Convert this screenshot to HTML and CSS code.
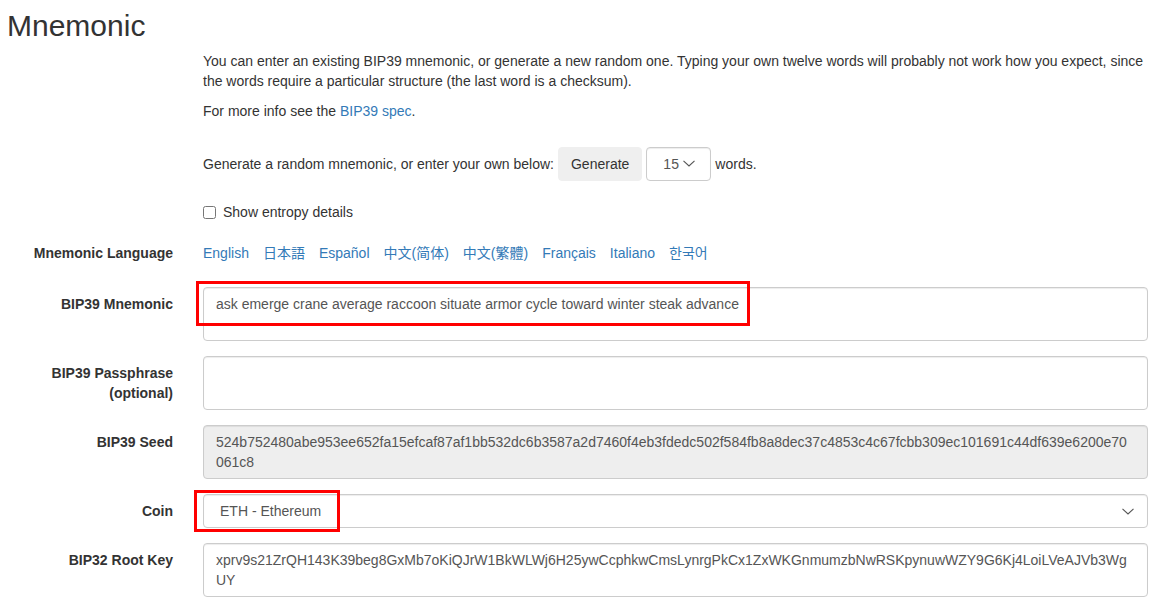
FILE: index.html
```html
<!DOCTYPE html>
<html lang="en">
<head>
<meta charset="utf-8">
<title>Mnemonic</title>
<link rel="stylesheet" href="styles.css">
</head>
<body>
<main class="page">
  <h2 class="title">Mnemonic</h2>
  <form class="form">
    <div class="row intro">
      <div class="label"></div>
      <div class="content">
        <p class="lead-text">You can enter an existing BIP39 mnemonic, or generate a new random one. Typing your own twelve words will probably not work how you expect, since<br>the words require a particular structure (the last word is a checksum).</p>
        <p>For more info see the <a href="#">BIP39 spec</a>.</p>
        <div class="gen-row">
          <span>Generate a random mnemonic, or enter your own below:</span>
          <button type="button" class="btn">Generate</button>
          <span class="select-wrap small">
            <select class="select small-select"><option>15</option></select>
            <svg class="chev" width="12" height="7" viewBox="0 0 12 7"><path d="M0.5 0.8 L6 6 L11.5 0.8" fill="none" stroke="#555" stroke-width="1.1"/></svg>
          </span>
          <span>words.</span>
        </div>
        <label class="check-row"><input type="checkbox" class="check"><span>Show entropy details</span></label>
      </div>
    </div>

    <div class="row lang-row">
      <div class="label">Mnemonic Language</div>
      <div class="langs">
        <a href="#">English</a>
        <a href="#" class="cjk-jp">日本語</a>
        <a href="#">Español</a>
        <a href="#" class="cjk-sc">中文(简体)</a>
        <a href="#" class="cjk-tc">中文(繁體)</a>
        <a href="#">Français</a>
        <a href="#">Italiano</a>
        <a href="#" class="cjk-kr">한국어</a>
      </div>
    </div>

    <div class="row">
      <div class="label">BIP39 Mnemonic</div>
      <div class="ctl">
        <textarea class="field" rows="2">ask emerge crane average raccoon situate armor cycle toward winter steak advance</textarea>
        <span class="mark mark-mnemonic"></span>
      </div>
    </div>

    <div class="row">
      <div class="label">BIP39 Passphrase<br>(optional)</div>
      <div class="ctl">
        <textarea class="field" rows="2"></textarea>
      </div>
    </div>

    <div class="row">
      <div class="label">BIP39 Seed</div>
      <div class="ctl">
        <textarea class="field readonly seed" rows="2" readonly>524b752480abe953ee652fa15efcaf87af1bb532dc6b3587a2d7460f4eb3fdedc502f584fb8a8dec37c4853c4c67fcbb309ec101691c44df639e6200e70061c8</textarea>
      </div>
    </div>

    <div class="row">
      <div class="label">Coin</div>
      <div class="ctl">
        <span class="select-wrap wide">
          <select class="select coin-select"><option>ETH - Ethereum</option></select>
          <svg class="chev chev-coin" width="12" height="7" viewBox="0 0 12 7"><path d="M0.5 0.8 L6 6 L11.5 0.8" fill="none" stroke="#555" stroke-width="1.1"/></svg>
        </span>
        <span class="mark mark-coin"></span>
      </div>
    </div>

    <div class="row">
      <div class="label">BIP32 Root Key</div>
      <div class="ctl">
        <textarea class="field" rows="2">xprv9s21ZrQH143K39beg8GxMb7oKiQJrW1BkWLWj6H25ywCcphkwCmsLynrgPkCx1ZxWKGnmumzbNwRSKpynuwWZY9G6Kj4LoiLVeAJVb3WgUY</textarea>
      </div>
    </div>
  </form>
</main>
</body>
</html>
```

FILE: styles.css
```css
* { box-sizing: border-box; }

html, body {
  margin: 0;
  padding: 0;
  background: #fff;
}

body {
  font-family: "Liberation Sans", Arial, sans-serif;
  font-size: 14px;
  line-height: 20px;
  color: #333;
  overflow: hidden;
}

.page {
  width: 1163px;
}

.title {
  margin: 9px 0 0 7px;
  font-size: 30px;
  line-height: 33px;
  font-weight: 500;
  color: #333;
}

.form {
  margin: 9px 0 0 0;
}

.row {
  display: grid;
  grid-template-columns: 173px 945px;
  column-gap: 30px;
  margin-bottom: 15px;
}

.label {
  text-align: right;
  font-weight: bold;
  padding-top: 7px;
  color: #333;
}

.intro {
  margin-bottom: 21px;
}

.intro .label { padding-top: 0; }

.content p {
  margin: 0 0 10px 0;
}

.lead-text {
  white-space: nowrap;
}

a {
  color: #337ab7;
  text-decoration: none;
}

.gen-row {
  margin-top: 26px;
  height: 34px;
  display: flex;
  align-items: baseline;
  gap: 4px;
}

.btn {
  font-family: inherit;
  font-size: 14px;
  line-height: 20px;
  height: 34px;
  padding: 6px 12px;
  border: 1px solid #efefef;
  border-radius: 4px;
  background: #efefef;
  color: #333;
}

.select-wrap {
  position: relative;
  display: inline-block;
}

.select {
  -webkit-appearance: none;
  appearance: none;
  font-family: inherit;
  font-size: 14px;
  line-height: 20px;
  height: 34px;
  border: 1px solid #ccc;
  border-radius: 4px;
  background: #fff;
  color: #555;
  padding: 6px 12px 6px 16px;
  box-shadow: inset 0 1px 1px rgba(0,0,0,.075);
}

.small-select {
  width: 65px;
}

.chev {
  position: absolute;
  right: 16px;
  top: 13px;
  pointer-events: none;
}

.check-row {
  margin-top: 21px;
  display: flex;
  align-items: center;
  height: 20px;
}

.check {
  width: 13px;
  height: 13px;
  margin: 0 7px 0 0;
}

.lang-row {
  margin-bottom: 24px;
}

.lang-row .label { padding-top: 0; }

.langs {
  display: flex;
  gap: 14px;
  white-space: nowrap;
}

.cjk-jp { font-family: "Liberation Sans", "Noto Sans CJK JP", sans-serif; }
.cjk-sc { font-family: "Liberation Sans", "Noto Sans CJK SC", sans-serif; }
.cjk-tc { font-family: "Liberation Sans", "Noto Sans CJK TC", sans-serif; }
.cjk-kr { font-family: "Liberation Sans", "Noto Sans CJK KR", sans-serif; }

.ctl {
  position: relative;
}

.field {
  display: block;
  width: 945px;
  height: 54px;
  padding: 6px 12px;
  font-family: "Liberation Sans", Arial, sans-serif;
  font-size: 14px;
  line-height: 20px;
  color: #555;
  border: 1px solid #ccc;
  border-radius: 4px;
  background: #fff;
  box-shadow: inset 0 1px 1px rgba(0,0,0,.075);
  resize: none;
  overflow: hidden;
  word-break: break-all;
  margin: 0;
}

.field.readonly {
  background: #eee;
}

.field.seed {
  padding-right: 17px;
}

.wide {
  display: block;
  width: 945px;
}

.coin-select {
  width: 945px;
  display: block;
}

.chev-coin {
  right: 14px;
  top: 14px;
}

.mark {
  position: absolute;
  border: 3px solid #f00;
  pointer-events: none;
}

.mark-mnemonic {
  left: -7px;
  top: -6px;
  width: 554px;
  height: 45px;
}

.mark-coin {
  left: -9px;
  top: -4px;
  width: 146px;
  height: 42px;
}
```
